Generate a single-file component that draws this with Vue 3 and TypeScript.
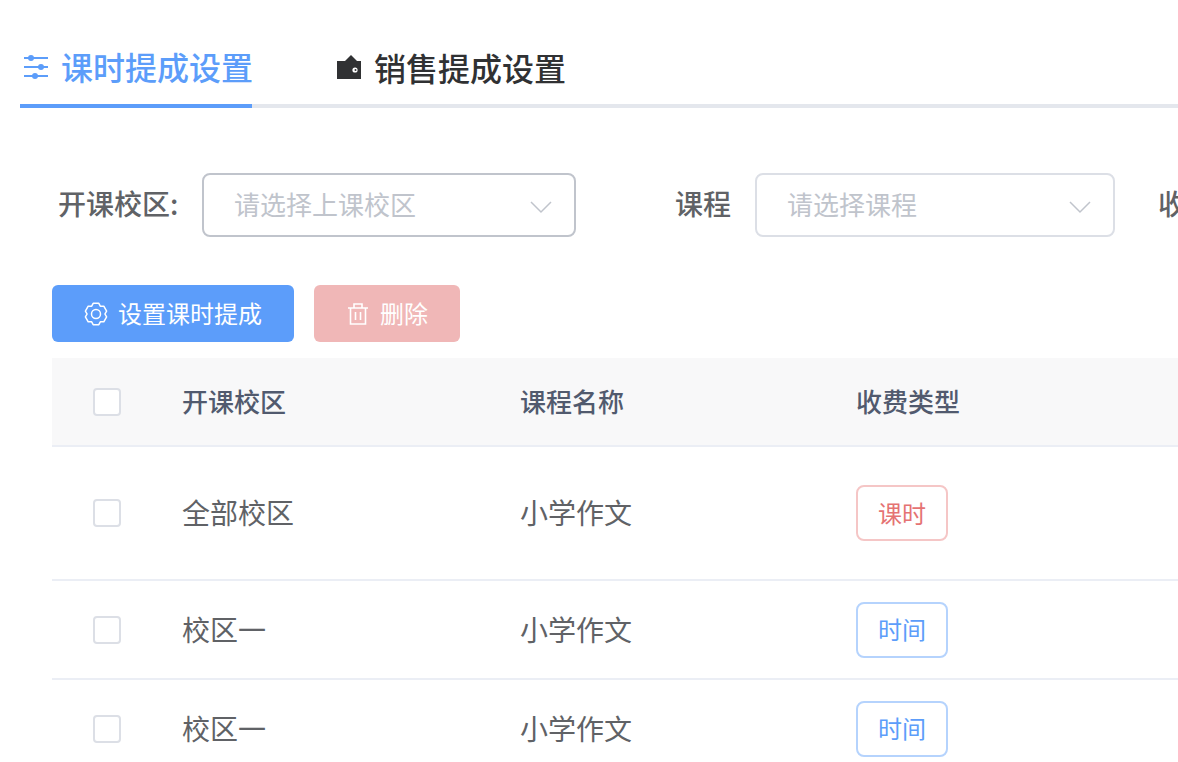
<script setup lang="ts">
import { computed } from 'vue'

interface Row {
  campus: string
  course: string
  type: string
  tone: 'red' | 'blue'
  tall?: boolean
}

const rows: Row[] = [
  { campus: '全部校区', course: '小学作文', type: '课时', tone: 'red', tall: true },
  { campus: '校区一', course: '小学作文', type: '时间', tone: 'blue' },
  { campus: '校区一', course: '小学作文', type: '时间', tone: 'blue' },
]

// six-tooth gear outline, tooth on top
const gearPath = computed(() => {
  const pts: string[] = []
  for (let i = 0; i < 6; i++) {
    const a = (i * Math.PI) / 3 - Math.PI / 2
    const list: [number, number][] = [
      [9, a - 0.5],
      [11, a - 0.26],
      [11, a + 0.26],
      [9, a + 0.5],
    ]
    for (const [r, t] of list) {
      pts.push(`${(12 + r * Math.cos(t)).toFixed(2)} ${(12 + r * Math.sin(t)).toFixed(2)}`)
    }
  }
  return `M${pts.join('L')}Z`
})
</script>

<template>
  <div class="page">
    <div class="tabs">
      <div class="tab active">
        <svg class="tab-icon" width="28" height="24" viewBox="0 0 28 24">
          <path d="M2 3h24M2 12h24M2 21h24" stroke="currentColor" stroke-width="2" fill="none" />
          <circle cx="9" cy="3" r="3" fill="currentColor" />
          <circle cx="19" cy="12" r="3" fill="currentColor" />
          <circle cx="13" cy="21" r="3" fill="currentColor" />
        </svg>
        <span>课时提成设置</span>
      </div>
      <div class="tab">
        <svg class="tab-icon" width="24" height="24" viewBox="0 0 24 24">
          <path d="M8 6l6-6 6 6z" fill="currentColor" />
          <path d="M0 6h24v18H0z" fill="currentColor" />
          <circle cx="18" cy="15" r="2.600" fill="#fff" />
          <circle cx="18.500" cy="15" r="1" fill="currentColor" />
        </svg>
        <span>销售提成设置</span>
      </div>
    </div>

    <div class="filters">
      <label class="filter-label first">开课校区:</label>
      <div class="select hover w-campus">
        <span>请选择上课校区</span>
        <svg width="22" height="13" viewBox="0 0 22 13"><path d="M1 1l10 10L21 1" fill="none" stroke="#c0c4cc" stroke-width="1.500" /></svg>
      </div>
      <label class="filter-label second">课程</label>
      <div class="select w-course">
        <span>请选择课程</span>
        <svg width="22" height="13" viewBox="0 0 22 13"><path d="M1 1l10 10L21 1" fill="none" stroke="#c0c4cc" stroke-width="1.500" /></svg>
      </div>
      <label class="filter-label third">收费类型</label>
    </div>

    <div class="actions">
      <button class="btn primary">
        <svg width="24" height="24" viewBox="0 0 24 24">
          <path :d="gearPath" fill="none" stroke="#fff" stroke-width="1.500" stroke-linejoin="round" />
          <circle cx="12" cy="12" r="4.500" fill="none" stroke="#fff" stroke-width="1.500" />
        </svg>
        <span>设置课时提成</span>
      </button>
      <button class="btn danger">
        <svg width="22" height="24" viewBox="0 0 22 24">
          <path d="M1 6h20M7 6V2h8v4M3.500 6v16h15V6M8.500 10v8M13.500 10v8" fill="none" stroke="#fff" stroke-width="1.600" />
        </svg>
        <span>删除</span>
      </button>
    </div>

    <table class="grid">
      <colgroup>
        <col class="c-check" />
        <col class="c-campus" />
        <col class="c-course" />
        <col class="c-type" />
        <col class="c-rest" />
      </colgroup>
      <thead>
        <tr>
          <th class="box"><i class="check"></i></th>
          <th>开课校区</th>
          <th>课程名称</th>
          <th>收费类型</th>
          <th></th>
        </tr>
      </thead>
      <tbody>
        <tr v-for="(row, i) in rows" :key="i" :class="{ tall: row.tall }">
          <td class="box"><i class="check"></i></td>
          <td>{{ row.campus }}</td>
          <td>{{ row.course }}</td>
          <td class="box"><span class="tag" :class="row.tone">{{ row.type }}</span></td>
          <td></td>
        </tr>
      </tbody>
    </table>
  </div>
</template>

<style>
html,
body {
  margin: 0;
  overflow: hidden;
  background: #fff;
}
</style>

<style scoped>
.page {
  width: 1178px;
  height: 762px;
  overflow: hidden;
  font-family: 'Noto Sans CJK SC', 'Liberation Sans', sans-serif;
  color: #606266;
}

.tabs {
  display: flex;
  margin: 28px 0 0 20px;
  height: 80px;
  border-bottom: 4px solid #e4e7ed;
  box-sizing: border-box;
}

.tab {
  display: flex;
  flex: none;
  align-items: center;
  height: 80px;
  box-sizing: border-box;
  padding-bottom: 2px;
  color: #303133;
  font-size: 32px;
  font-weight: 500;
  line-height: 44px;
  white-space: nowrap;
}

.tab.active {
  color: #5c9dfa;
  width: 232px;
  border-bottom: 4px solid #5c9dfa;
  padding-bottom: 0;
}

.tab + .tab {
  margin-left: 85px;
}

.tab-icon {
  flex: none;
  margin-right: 13px;
}

.tab.active .tab-icon {
  margin: 2px 11px 0 2px;
}

.filters {
  display: flex;
  align-items: center;
  margin-top: 65px;
  height: 64px;
  white-space: nowrap;
}

.filter-label {
  flex: none;
  box-sizing: border-box;
  padding-bottom: 4px;
  font-size: 28px;
  font-weight: 500;
  color: #606266;
}

.first {
  margin-left: 58px;
  width: 144px;
}

.second {
  margin-left: 99px;
  width: 80px;
}

.third {
  margin-left: 43px;
}

.select {
  display: flex;
  flex: none;
  align-items: center;
  justify-content: space-between;
  box-sizing: border-box;
  height: 64px;
  padding: 0 22px 0 30px;
  border: 2px solid #dcdfe6;
  border-radius: 8px;
  color: #c0c4cc;
  font-size: 26px;
}

.select span {
  padding-bottom: 4px;
}

.select svg {
  margin-top: 4px;
}

.hover {
  border-color: #c0c4cc;
}

.w-campus {
  width: 374px;
}

.w-course {
  width: 360px;
}

.actions {
  display: flex;
  gap: 20px;
  margin: 48px 0 0 52px;
}

.btn {
  display: flex;
  align-items: center;
  height: 57px;
  border: 0;
  border-radius: 6px;
  color: #fff;
  font-family: inherit;
  font-size: 24px;
  padding: 0;
}

.btn span {
  padding-bottom: 2px;
}

.btn svg {
  margin-right: 10px;
}

.primary {
  width: 242px;
  padding-left: 32px;
  background: #5c9dfa;
}

.danger {
  width: 146px;
  padding-left: 33px;
  background: #f0b7b7;
}

.danger svg {
  margin-right: 11px;
}

.grid {
  width: 1400px;
  margin: 16px 0 0 52px;
  border-collapse: collapse;
  table-layout: fixed;
}

.c-check {
  width: 130px;
}

.c-campus {
  width: 338px;
}

.c-course {
  width: 336px;
}

.c-type {
  width: 300px;
}

th,
td {
  box-sizing: border-box;
  padding: 0 0 2px;
  border-bottom: 2px solid #ebeef5;
}

th {
  height: 88px;
  background: #f8f8f9;
  color: #515a6e;
  font-size: 26px;
  font-weight: 500;
  text-align: left;
}

td {
  height: 99px;
  color: #606266;
  font-size: 28px;
}

th.box,
td.box {
  padding: 0;
}

.tall td {
  height: 134px;
}

.check {
  display: block;
  box-sizing: border-box;
  width: 28px;
  height: 28px;
  margin-left: 41px;
  background: #fff;
  border: 2px solid #dcdfe6;
  border-radius: 4px;
}

.tag {
  display: inline-flex;
  align-items: center;
  justify-content: center;
  box-sizing: border-box;
  width: 92px;
  height: 56px;
  padding-bottom: 2px;
  border: 2px solid;
  border-radius: 8px;
  font-size: 24px;
  vertical-align: middle;
}

.red {
  color: #e57373;
  border-color: #f5c6c6;
}

.blue {
  color: #5c9dfa;
  border-color: #b5d3fd;
}
</style>
